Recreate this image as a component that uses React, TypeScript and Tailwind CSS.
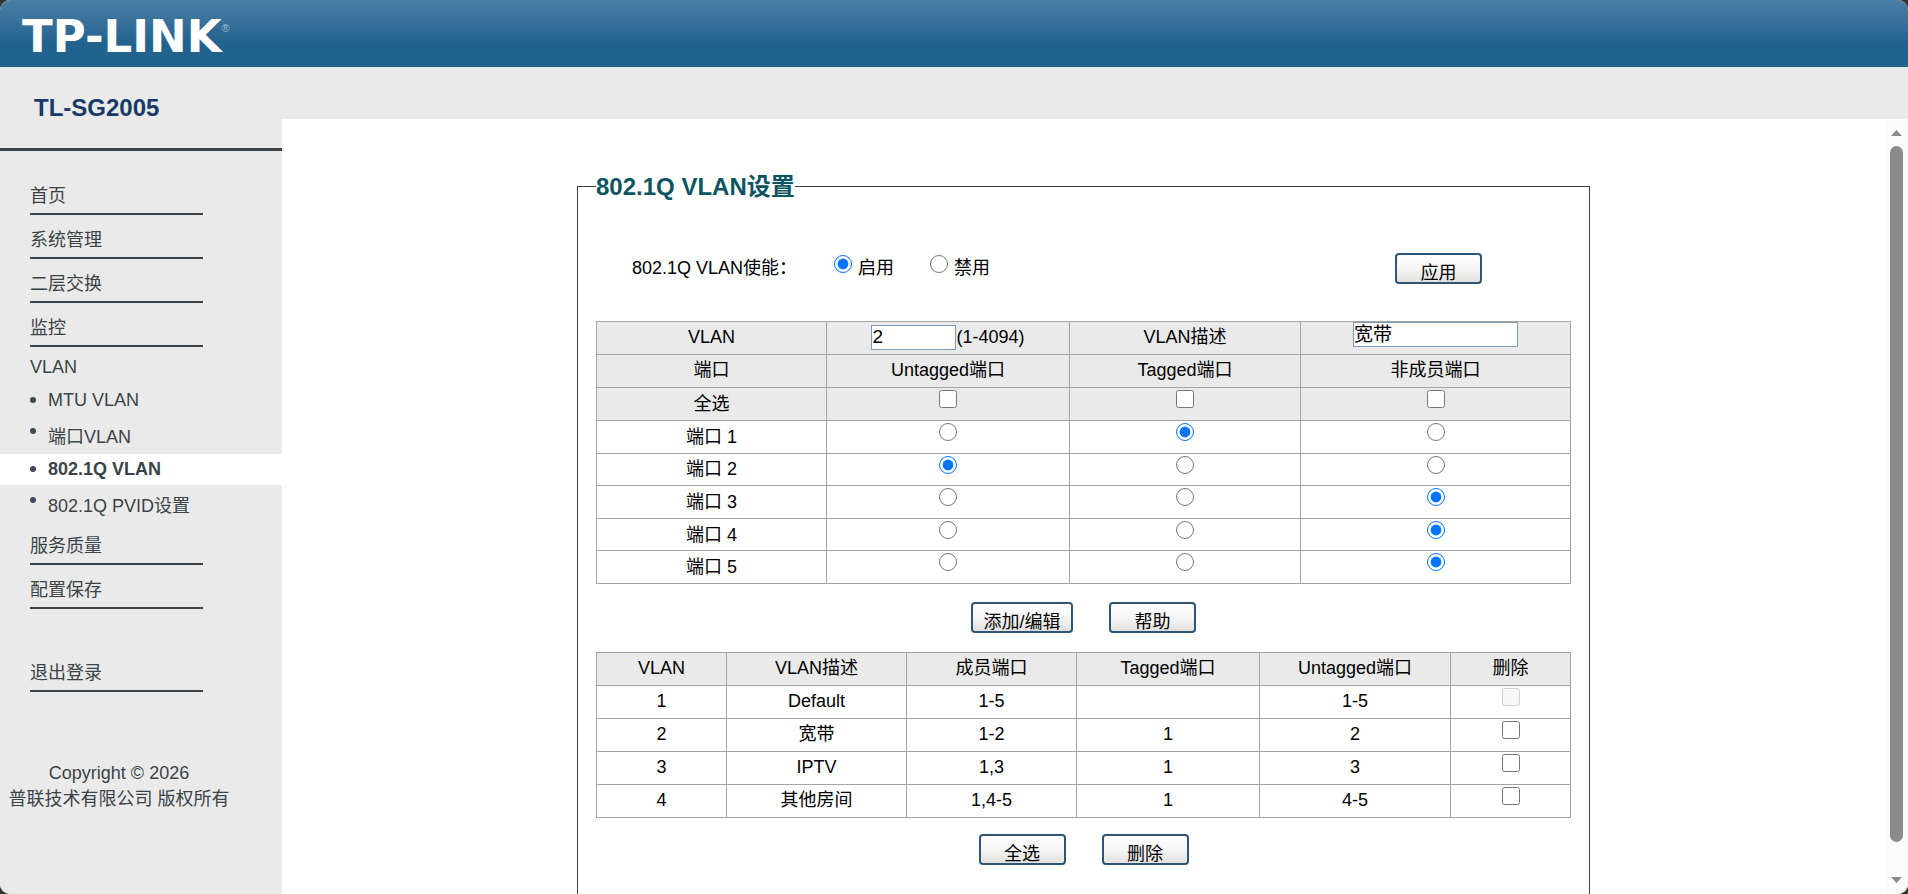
import { useState } from "react";
import type { ReactNode } from "react";

type Membership = "untagged" | "tagged" | "none";

const memberships: { key: Membership; label: string }[] = [
  { key: "untagged", label: "Untagged端口" },
  { key: "tagged", label: "Tagged端口" },
  { key: "none", label: "非成员端口" },
];

const vlans = [
  { id: 1, name: "Default", members: "1-5", tagged: "", untagged: "1-5" },
  { id: 2, name: "宽带", members: "1-2", tagged: "1", untagged: "2" },
  { id: 3, name: "IPTV", members: "1,3", tagged: "1", untagged: "3" },
  { id: 4, name: "其他房间", members: "1,4-5", tagged: "1", untagged: "4-5" },
];

const cell = "border border-[#a5a5a5] p-0";
const textCell = "border border-[#a5a5a5] p-0 pb-[2px]";

function NavItem({ children }: { children: ReactNode }) {
  return (
    <a href="#" className="flex h-11 w-[173px] items-center border-b-2 border-[#3a4448] pt-2">
      {children}
    </a>
  );
}

function SubItem({ children, className }: { children: ReactNode; className: string }) {
  return (
    <li className={`flex pl-[30px] ${className}`}>
      <span className="mr-3 size-[6px] rounded-full bg-[#3c4a5c]" />
      <a href="#">{children}</a>
    </li>
  );
}

function Button({ children, wide }: { children: ReactNode; wide?: boolean }) {
  return (
    <button
      type="button"
      className={`flex h-[31px] items-start justify-center overflow-hidden rounded-[4px] border-2 border-[#2b5679] bg-linear-to-b from-white via-[#f6f6f6] to-[#e2e1de] pt-[5px] leading-[26px] ${wide ? "w-[102px]" : "w-[87px]"}`}
    >
      {children}
    </button>
  );
}

function Header() {
  return (
    <header className="flex h-[67px] shrink-0 items-center bg-linear-to-b from-[#4b7fa4] via-[#22628f] via-65% to-[#22628f] pl-[22px] text-white">
      <span className="pt-[6px] font-['DejaVu_Sans',sans-serif] text-[45px] leading-[42px] font-bold">TP-LINK</span>
      <span className="mb-3 text-[11px] leading-3 text-[#9dbdd3]">®</span>
    </header>
  );
}

function Sidebar() {
  return (
    <aside className="flex w-[282px] shrink-0 flex-col bg-[#eaeaea] text-[#3a4448]">
      <h1 className="flex h-[84px] shrink-0 items-center border-b-3 border-[#3a4448] pl-[34px] text-2xl font-bold text-[#173a68]">
        TL-SG2005
      </h1>
      <nav className="pt-5">
        <div className="pl-[30px]">
          <NavItem>首页</NavItem>
          <NavItem>系统管理</NavItem>
          <NavItem>二层交换</NavItem>
          <NavItem>监控</NavItem>
          <a href="#" className="flex h-10 items-center">VLAN</a>
        </div>
        <ul>
          <SubItem className="h-[26px] items-center">MTU VLAN</SubItem>
          <li className="flex h-[41px] items-start pt-[11px] pl-[30px]">
            <span className="mt-[4px] mr-3 size-[6px] rounded-full bg-[#3c4a5c]" />
            <a href="#">端口VLAN</a>
          </li>
          <SubItem className="h-[31px] items-center bg-white pb-[2px] font-bold">802.1Q VLAN</SubItem>
          <li className="flex h-9 items-start pt-[8px] pl-[30px]">
            <span className="mt-[4px] mr-3 size-[6px] rounded-full bg-[#3c4a5c]" />
            <a href="#">802.1Q PVID设置</a>
          </li>
        </ul>
        <div className="pl-[30px]">
          <NavItem>服务质量</NavItem>
          <NavItem>配置保存</NavItem>
          <div className="pt-[39px]">
            <NavItem>退出登录</NavItem>
          </div>
        </div>
      </nav>
      <footer className="w-[238px] pt-[68px] text-center leading-[26px] whitespace-nowrap">
        <p>Copyright © 2026</p>
        <p>普联技术有限公司 版权所有</p>
      </footer>
    </aside>
  );
}

function VlanForm() {
  const [ports, setPorts] = useState<Membership[]>(["tagged", "untagged", "none", "none", "none"]);

  return (
    <table className="mt-[37px] h-[263px] w-full table-fixed border-collapse text-center">
      <colgroup>
        <col className="w-[230px]" />
        <col className="w-[243px]" />
        <col className="w-[231px]" />
        <col />
      </colgroup>
      <tbody>
        <tr className="h-[33px] bg-[#eaeaea]">
          <td className={textCell}><label htmlFor="vid">VLAN</label></td>
          <td className={textCell}>
            <div className="flex items-center justify-center">
              <input id="vid" defaultValue="2" className="h-[25px] w-[85px] border border-[#7f9db9] bg-white text-[19px]" />
              <span>(1-4094)</span>
            </div>
          </td>
          <td className={textCell}><label htmlFor="vname">VLAN描述</label></td>
          <td className={`${cell} align-top`}>
            <input id="vname" defaultValue="宽带" className="mx-auto block h-[25px] w-[165px] border border-[#7f9db9] bg-white text-[19px]" />
          </td>
        </tr>
        <tr className="h-[33px] bg-[#eaeaea]">
          <td className={textCell}>端口</td>
          {memberships.map((m) => (
            <td key={m.key} className={textCell}>{m.label}</td>
          ))}
        </tr>
        <tr className="h-[33px] bg-[#eaeaea]">
          <td className={cell}>全选</td>
          {memberships.map((m) => (
            <td key={m.key} className={`${cell} pt-[2px] align-top`}>
              <input type="checkbox" aria-label={`全选 ${m.label}`} className="mx-auto block size-[18px]" />
            </td>
          ))}
        </tr>
        {ports.map((value, i) => (
          <tr key={i}>
            <td className={cell}>端口 {i + 1}</td>
            {memberships.map((m) => (
              <td key={m.key} className={`${cell} pt-[2px] align-top`}>
                <input
                  type="radio"
                  name={`port${i + 1}`}
                  aria-label={`端口 ${i + 1} ${m.label}`}
                  checked={value === m.key}
                  onChange={() => setPorts(ports.map((p, j) => (j === i ? m.key : p)))}
                  className="mx-auto block size-[18px]"
                />
              </td>
            ))}
          </tr>
        ))}
      </tbody>
    </table>
  );
}

function VlanList() {
  return (
    <table className="mt-[19px] w-full table-fixed border-collapse text-center">
      <colgroup>
        <col className="w-[130px]" />
        <col className="w-[180px]" />
        <col className="w-[170px]" />
        <col className="w-[183px]" />
        <col className="w-[191px]" />
        <col />
      </colgroup>
      <thead>
        <tr className="h-[33px] bg-[#eaeaea]">
          {["VLAN", "VLAN描述", "成员端口", "Tagged端口", "Untagged端口", "删除"].map((h) => (
            <th key={h} className={`${textCell} font-normal`}>{h}</th>
          ))}
        </tr>
      </thead>
      <tbody>
        {vlans.map((v) => (
          <tr key={v.id} className="h-[33px]">
            <td className={textCell}>{v.id}</td>
            <td className={textCell}>{v.name}</td>
            <td className={textCell}>{v.members}</td>
            <td className={textCell}>{v.tagged}</td>
            <td className={textCell}>{v.untagged}</td>
            <td className={`${cell} pt-[2px] align-top`}>
              <input type="checkbox" aria-label={`删除 VLAN ${v.id}`} disabled={v.id === 1} className="mx-auto block size-[18px]" />
            </td>
          </tr>
        ))}
      </tbody>
    </table>
  );
}

function ScrollTrack() {
  return (
    <div className="flex w-[23px] shrink-0 flex-col items-center bg-[#fcfcfc] pt-[11px] pb-[11px]">
      <svg viewBox="0 0 11 6" className="h-[6px] w-[11px] fill-[#8b8b8b]"><path d="M0 6 5.5 0 11 6z" /></svg>
      <div className="mt-[10px] mb-[35px] w-[13px] flex-1 rounded-full bg-[#8b8b8b]" />
      <svg viewBox="0 0 11 6" className="h-[6px] w-[11px] fill-[#8b8b8b]"><path d="M0 0h11L5.5 6z" /></svg>
    </div>
  );
}

export default function App() {
  return (
    <div className="h-screen bg-[#333]">
      <div className="flex h-full flex-col overflow-hidden rounded-[10px] bg-white font-['Liberation_Sans','Noto_Sans_CJK_SC',sans-serif] text-lg leading-[26px] text-black">
        <Header />
        <div className="flex min-h-0 flex-1">
          <Sidebar />
          <div className="flex min-w-0 flex-1 flex-col">
            <div className="h-[52px] shrink-0 bg-[#eaeaea]" />
            <div className="flex min-h-0 flex-1">
              <main className="min-w-0 flex-1 overflow-hidden pt-[51px]">
                <fieldset className="mx-auto w-full max-w-[1013px] border border-[#3a4448] px-[18px] pb-20">
                  <legend className="pt-[2px] text-2xl leading-[30px] font-bold text-[#0b5563]">802.1Q VLAN设置</legend>
                  <div className="mt-[51px] flex h-[31px] items-center pl-9">
                    <span className="w-[202px] pb-[2px]">802.1Q VLAN使能：</span>
                    <label className="flex w-24 gap-[6px] pb-[2px]">
                      <input type="radio" name="enable" defaultChecked className="size-[18px]" />
                      启用
                    </label>
                    <label className="flex gap-[6px] pb-[2px]">
                      <input type="radio" name="enable" className="size-[18px]" />
                      禁用
                    </label>
                    <div className="mr-[89px] ml-auto"><Button>应用</Button></div>
                  </div>
                  <VlanForm />
                  <div className="mt-[18px] flex justify-center gap-9">
                    <Button wide>添加/编辑</Button>
                    <Button>帮助</Button>
                  </div>
                  <VlanList />
                  <div className="mt-4 flex justify-center gap-9">
                    <Button>全选</Button>
                    <Button>删除</Button>
                  </div>
                </fieldset>
              </main>
              <ScrollTrack />
            </div>
          </div>
        </div>
      </div>
    </div>
  );
}
